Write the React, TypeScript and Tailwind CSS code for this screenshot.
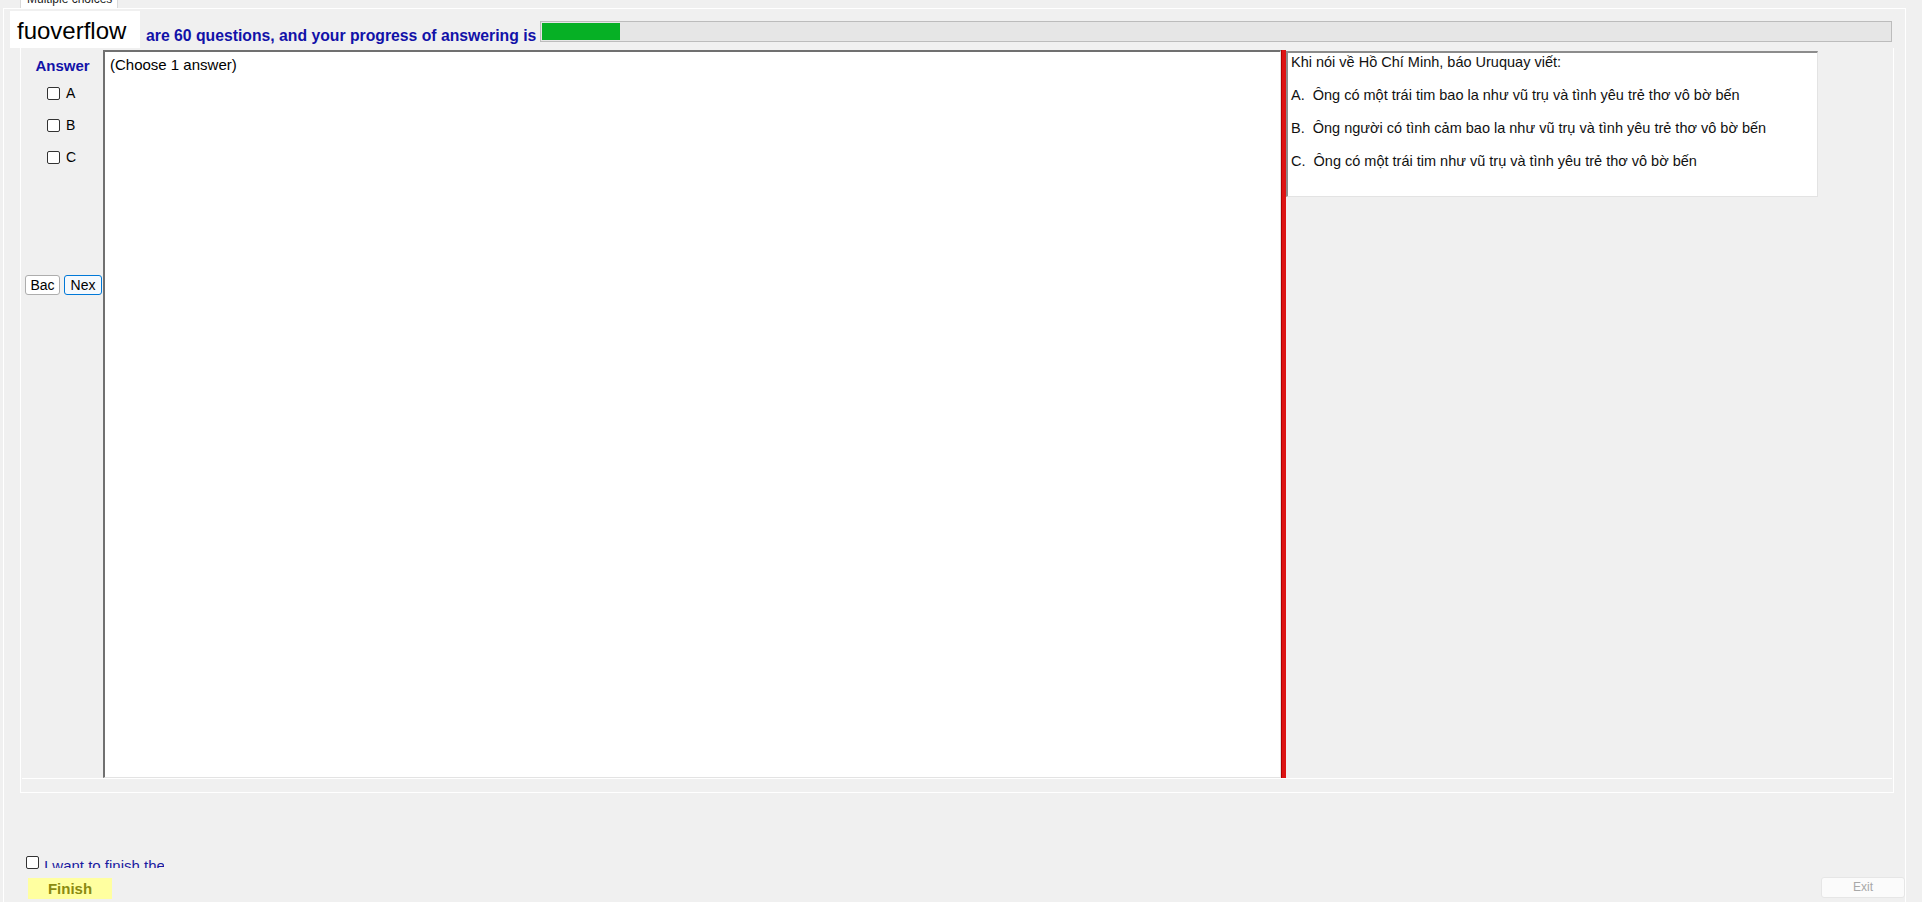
import React from 'react';

const options = [
  'A.  Ông có một trái tim bao la như vũ trụ và tình yêu trẻ thơ vô bờ bến',
  'B.  Ông người có tình cảm bao la như vũ trụ và tình yêu trẻ thơ vô bờ bến',
  'C.  Ông có một trái tim như vũ trụ và tình yêu trẻ thơ vô bờ bến',
];

function Box() {
  return <span className="block w-[13px] h-[13px] bg-white border border-[#333333] rounded-[2px] shrink-0" />;
}

export default function App() {
  const answered = 78;

  return (
    <div className="w-[1926px] h-[906px] bg-white overflow-hidden font-['Liberation_Sans',Arial,sans-serif] text-black">
      <div className="w-[1922px] h-[902px] bg-[#f0f0f0] flex flex-col">
        {/* tab strip */}
        <div className="h-[8px] flex pl-[20px] shrink-0">
          <div className="w-[98px] h-[8px] bg-white border-x border-[#dadada] overflow-hidden">
            <div className="-mt-[8px] pl-[6px] text-[12px] leading-[14px] text-[#222] whitespace-nowrap">Multiple choices</div>
          </div>
        </div>

        {/* tab page */}
        <div className="flex-1 ml-[3px] w-[1903px] border-l border-r border-t border-white flex flex-col">
          {/* header */}
          <div className="flex items-start pt-[2px] h-[39px] shrink-0">
            <div className="ml-[6px] w-[130px] h-[37px] bg-white pl-[7px] pt-[6px] text-[24px] leading-[28px] text-black">
              fuoverflow
            </div>
            <div className="ml-[6px] mt-[16px] text-[15.75px] leading-[17px] font-bold text-[#1212a8] whitespace-nowrap">
              are 60 questions, and your progress of answering is
            </div>
            <div className="ml-[4px] mt-[10px] w-[1352px] h-[21px] bg-[#e6e6e6] border border-[#bcbcbc] p-px">
              <div className="h-full bg-[#06b025]" style={{ width: answered }} />
            </div>
          </div>

          {/* question group */}
          <div className="ml-[16px] w-[1874px] h-[745px] border-l border-r border-b border-white pt-[2px] pl-px shrink-0">
            <div className="h-[729px] w-[1870px] border-b border-white flex">
              {/* answer column */}
              <div className="w-[81px] flex flex-col">
                <div className="pt-[7px] text-center text-[15px] leading-[17px] font-bold text-[#1212a8]">Answer</div>
                <div className="mt-[3px] flex flex-col">
                  {['A', 'B', 'C'].map((k) => (
                    <label key={k} className="h-[32px] flex items-center pl-[25px] gap-[6px] text-[14px]">
                      <Box />
                      <span>{k}</span>
                    </label>
                  ))}
                </div>
                <div className="mt-[102px] flex pl-[3px] gap-[4px]">
                  <button className="w-[35px] h-[20px] bg-white border border-[#adadad] rounded-[3px] text-[14px] leading-[18px] overflow-hidden whitespace-nowrap">
                    Bac
                  </button>
                  <button className="w-[38px] h-[20px] bg-[#f5f9fd] border border-[#0078d7] rounded-[3px] text-[14px] leading-[18px] overflow-hidden whitespace-nowrap">
                    Nex
                  </button>
                </div>
              </div>

              {/* answer text box */}
              <div className="w-[1178px] h-[728px] bg-white border-t-2 border-l-2 border-t-[#707070] border-l-[#707070] border-r border-b border-r-[#e3e3e3] border-b-[#e3e3e3] pl-[5px] pt-[4px] text-[15px] leading-[17px]">
                (Choose 1 answer)
              </div>

              {/* splitter */}
              <div className="w-[5px] h-[728px] bg-[#dc1414] border-l border-[#b00000]" />

              {/* question */}
              <div className="flex-1 pt-px">
                <div className="w-[532px] h-[146px] bg-white border-t-2 border-l-2 border-t-[#8c8c8c] border-l-[#8c8c8c] border-r border-b border-r-[#e3e3e3] border-b-[#e3e3e3] pl-[3px] pt-px flex flex-col gap-[16px] text-[14.5px] leading-[17px] text-[#111]">
                  <div>Khi nói về Hồ Chí Minh, báo Uruquay viết:</div>
                  {options.map((o) => (
                    <div key={o} className="whitespace-pre">{o}</div>
                  ))}
                </div>
              </div>
            </div>
          </div>

          {/* finish */}
          <div className="mt-[61px] h-[17px] flex items-start pl-[22px] gap-[5px]">
            <span className="mt-[2px]"><Box /></span>
            <span className="w-[120px] h-[14px] overflow-hidden">
              <span className="block text-[15px] leading-[17px] text-[#1a1aa0] whitespace-nowrap mt-[3px]">I want to finish the exam</span>
            </span>
          </div>
          <div className="mt-[6px] flex items-start justify-between">
            <button className="ml-[24px] mt-px w-[84px] h-[21px] bg-[#ffffa0] text-[15px] leading-[21px] font-bold text-[#8a8a10]">
              Finish
            </button>
            <button className="w-[84px] h-[21px] bg-[#fbfbfb] border border-[#e6e6e6] rounded-[3px] text-[12px] leading-[19px] text-[#a8a8a8]">
              Exit
            </button>
          </div>
        </div>
      </div>
    </div>
  );
}
